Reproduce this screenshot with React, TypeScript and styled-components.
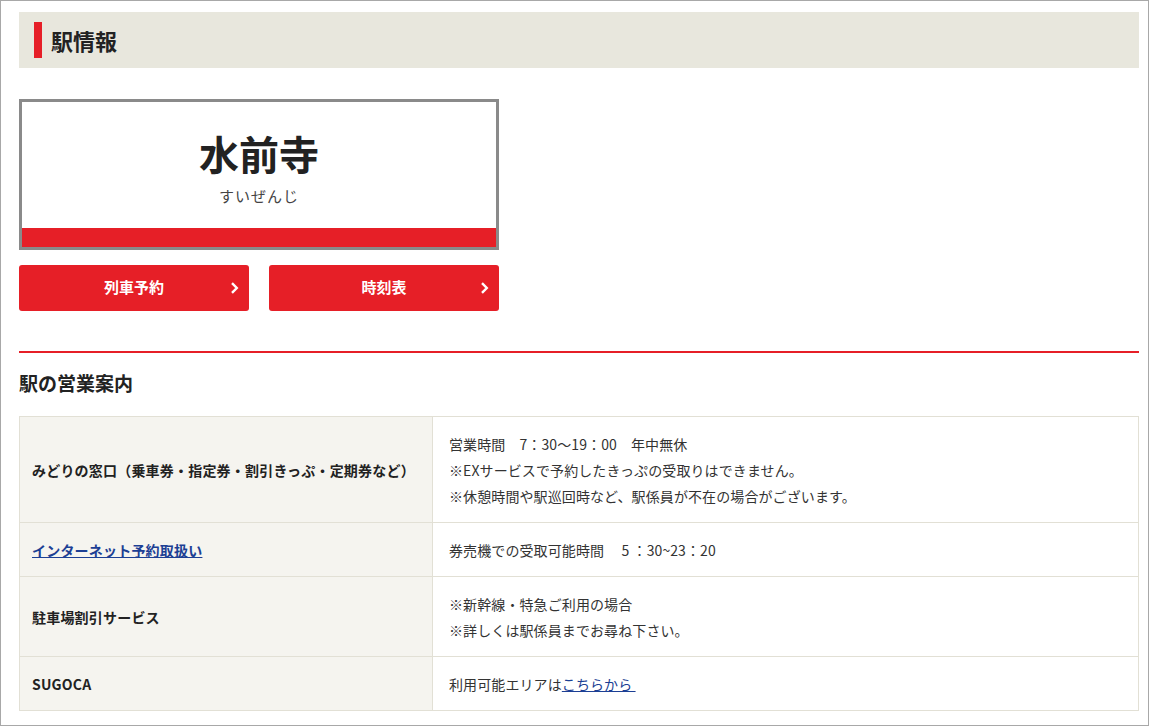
import React from 'react';
import styled, { createGlobalStyle } from 'styled-components';

const GlobalStyle = createGlobalStyle`
  html, body {
    margin: 0;
    padding: 0;
    background: #fff;
  }
  body {
    font-family: "Noto Sans CJK JP", "Noto Sans", sans-serif;
    color: #333;
  }
`;

const Page = styled.div`
  box-sizing: border-box;
  width: 1149px;
  height: 726px;
  border: 1px solid #a8a8a8;
  padding: 11px 9px 0 18px;
  overflow: hidden;
`;

const TitleBar = styled.div`
  height: 56px;
  background: #e8e7dd;
  display: flex;
  align-items: center;
  padding-left: 15px;
`;

const TitleMark = styled.span`
  width: 8px;
  height: 36px;
  background: #e61f27;
  margin-right: 9px;
`;

const Title = styled.h1`
  margin: 0;
  font-size: 22px;
  font-weight: 700;
  color: #222;
  line-height: 1;
`;

const StationCard = styled.div`
  box-sizing: border-box;
  margin-top: 31px;
  width: 480px;
  height: 151px;
  border: 3px solid #8a8a8a;
  display: flex;
  flex-direction: column;
`;

const StationBody = styled.div`
  flex: 1;
  display: flex;
  flex-direction: column;
  align-items: center;
  justify-content: center;
  padding-top: 6px;
`;

const StationName = styled.div`
  font-size: 40px;
  font-weight: 700;
  color: #222;
  line-height: 1.1;
`;

const StationKana = styled.div`
  margin-top: 10px;
  font-size: 15px;
  color: #444;
  letter-spacing: 1px;
`;

const StationBand = styled.div`
  height: 19px;
  background: #e61f27;
`;

const ButtonRow = styled.div`
  display: flex;
  gap: 20px;
  margin-top: 15px;
`;

const RedButton = styled.a`
  position: relative;
  box-sizing: border-box;
  width: 230px;
  height: 46px;
  padding-bottom: 4px;
  border-radius: 3px;
  background: #e61f27;
  color: #fff;
  font-size: 15px;
  font-weight: 700;
  display: flex;
  align-items: center;
  justify-content: center;
  text-decoration: none;
  cursor: pointer;
`;

const Chevron = styled.svg`
  position: absolute;
  right: 10px;
  top: 17px;
`;

const Divider = styled.hr`
  margin: 40px 0 0;
  border: 0;
  height: 2px;
  background: #e61f27;
`;

const SectionTitle = styled.h2`
  margin: 18px 0 21px;
  font-size: 19px;
  font-weight: 700;
  color: #222;
  line-height: 24px;
`;

const InfoTable = styled.table`
  width: 1120px;
  border-collapse: collapse;
  font-size: 14px;
`;

const HeadCell = styled.th`
  width: 388px;
  background: #f5f4ef;
  border: 1px solid #e2e0d5;
  padding: 13.5px 12px;
  text-align: left;
  font-weight: 700;
  color: #222;
  line-height: 26px;
  letter-spacing: 0.2px;
`;

const DataCell = styled.td`
  border: 1px solid #e2e0d5;
  padding: 13.5px 16px;
  color: #333;
  line-height: 26px;
  letter-spacing: 0.1px;
`;

const Link = styled.a`
  color: #1c3f94;
  text-decoration: underline;
`;

function Arrow() {
  return (
    <Chevron width="9" height="12" viewBox="0 0 9 12">
      <path d="M2 1.2 L6.8 6 L2 10.8" fill="none" stroke="#fff" strokeWidth="2.4" />
    </Chevron>
  );
}

export default function App() {
  return (
    <>
      <GlobalStyle />
      <Page>
        <TitleBar>
          <TitleMark />
          <Title>駅情報</Title>
        </TitleBar>

        <StationCard>
          <StationBody>
            <StationName>水前寺</StationName>
            <StationKana>すいぜんじ</StationKana>
          </StationBody>
          <StationBand />
        </StationCard>

        <ButtonRow>
          <RedButton>列車予約<Arrow /></RedButton>
          <RedButton>時刻表<Arrow /></RedButton>
        </ButtonRow>

        <Divider />
        <SectionTitle>駅の営業案内</SectionTitle>

        <InfoTable>
          <tbody>
            <tr>
              <HeadCell>みどりの窓口（乗車券・指定券・割引きっぷ・定期券など）</HeadCell>
              <DataCell>
                営業時間　7：30〜19：00　年中無休<br />
                ※EXサービスで予約したきっぷの受取りはできません。<br />
                ※休憩時間や駅巡回時など、駅係員が不在の場合がございます。
              </DataCell>
            </tr>
            <tr>
              <HeadCell><Link>インターネット予約取扱い</Link></HeadCell>
              <DataCell>券売機での受取可能時間　 5 ：30~23：20</DataCell>
            </tr>
            <tr>
              <HeadCell>駐車場割引サービス</HeadCell>
              <DataCell>
                ※新幹線・特急ご利用の場合<br />
                ※詳しくは駅係員までお尋ね下さい。
              </DataCell>
            </tr>
            <tr>
              <HeadCell>SUGOCA</HeadCell>
              <DataCell>利用可能エリアは<Link>こちらから&nbsp;</Link></DataCell>
            </tr>
          </tbody>
        </InfoTable>
      </Page>
    </>
  );
}
